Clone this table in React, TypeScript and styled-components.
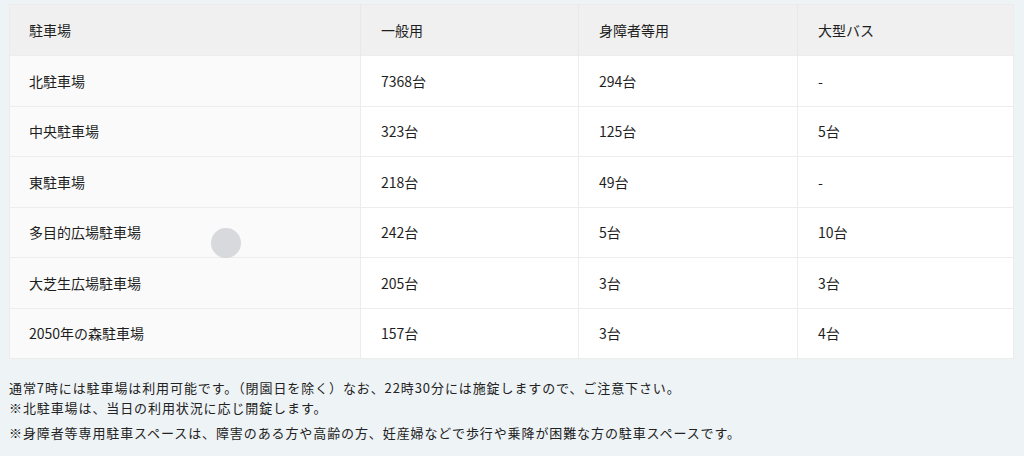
import styled, { createGlobalStyle } from 'styled-components';

const GlobalStyle = createGlobalStyle`
  html, body {
    margin: 0;
    padding: 0;
    background: #eef3f6;
    font-family: "Noto Sans CJK JP", "Noto Sans", sans-serif;
    color: #222;
  }
`;

const Page = styled.div`
  position: relative;
  width: 1024px;
  height: 456px;
  padding: 4px 10px 0 9px;
  box-sizing: border-box;
  overflow: hidden;
`;

const Table = styled.table`
  width: 100%;
  border-collapse: collapse;
  table-layout: fixed;
  background: #fff;
  border: 1px solid #ececec;
  font-size: 14px;
  color: #1e1e1e;
`;

const HeadCell = styled.th<{ $pad?: number }>`
  background: #f0f0f0;
  height: 50px;
  padding: 0 0 0 ${(p) => p.$pad ?? 19}px;
  text-align: left;
  font-weight: 400;
  border-right: 1px solid #e8e8e8;
  &:last-child {
    border-right: none;
  }
`;

const Row = styled.tr`
  border-top: 1px solid #ededed;
`;

const Cell = styled.td<{ $first?: boolean }>`
  height: 49.5px;
  padding: 0 0 0 ${(p) => (p.$first ? '19px' : '20px')};
  background: ${(p) => (p.$first ? '#fafafa' : '#fff')};
  border-right: 1px solid #ececec;
  &:last-child {
    border-right: none;
  }
`;

const Notes = styled.div`
  margin-top: 19px;
  font-size: 13px;
  letter-spacing: 0.9px;
  color: #222;
`;

const NoteLine = styled.p<{ $gap?: number }>`
  margin: ${(p) => p.$gap ?? 0}px 0 0;
  line-height: 20px;
`;

const Touch = styled.div`
  position: absolute;
  left: 211px;
  top: 228px;
  width: 30px;
  height: 30px;
  border-radius: 50%;
  background: rgba(200, 203, 208, 0.7);
  pointer-events: none;
`;

const rows = [
  ['北駐車場', '7368台', '294台', '-'],
  ['中央駐車場', '323台', '125台', '5台'],
  ['東駐車場', '218台', '49台', '-'],
  ['多目的広場駐車場', '242台', '5台', '10台'],
  ['大芝生広場駐車場', '205台', '3台', '3台'],
  ['2050年の森駐車場', '157台', '3台', '4台'],
];

export default function App() {
  return (
    <Page>
      <GlobalStyle />
      <Table>
        <colgroup>
          <col style={{ width: 351 }} />
          <col style={{ width: 218 }} />
          <col style={{ width: 219 }} />
          <col />
        </colgroup>
        <thead>
          <tr>
            <HeadCell>駐車場</HeadCell>
            <HeadCell $pad={20}>一般用</HeadCell>
            <HeadCell $pad={20}>身障者等用</HeadCell>
            <HeadCell $pad={20}>大型バス</HeadCell>
          </tr>
        </thead>
        <tbody>
          {rows.map((r) => (
            <Row key={r[0]}>
              <Cell $first>{r[0]}</Cell>
              <Cell>{r[1]}</Cell>
              <Cell>{r[2]}</Cell>
              <Cell>{r[3]}</Cell>
            </Row>
          ))}
        </tbody>
      </Table>
      <Notes>
        <NoteLine>通常7時には駐車場は利用可能です。（閉園日を除く）なお、22時30分には施錠しますので、ご注意下さい。</NoteLine>
        <NoteLine>※北駐車場は、当日の利用状況に応じ開錠します。</NoteLine>
        <NoteLine $gap={5}>※身障者等専用駐車スペースは、障害のある方や高齢の方、妊産婦などで歩行や乗降が困難な方の駐車スペースです。</NoteLine>
      </Notes>
      <Touch />
    </Page>
  );
}
